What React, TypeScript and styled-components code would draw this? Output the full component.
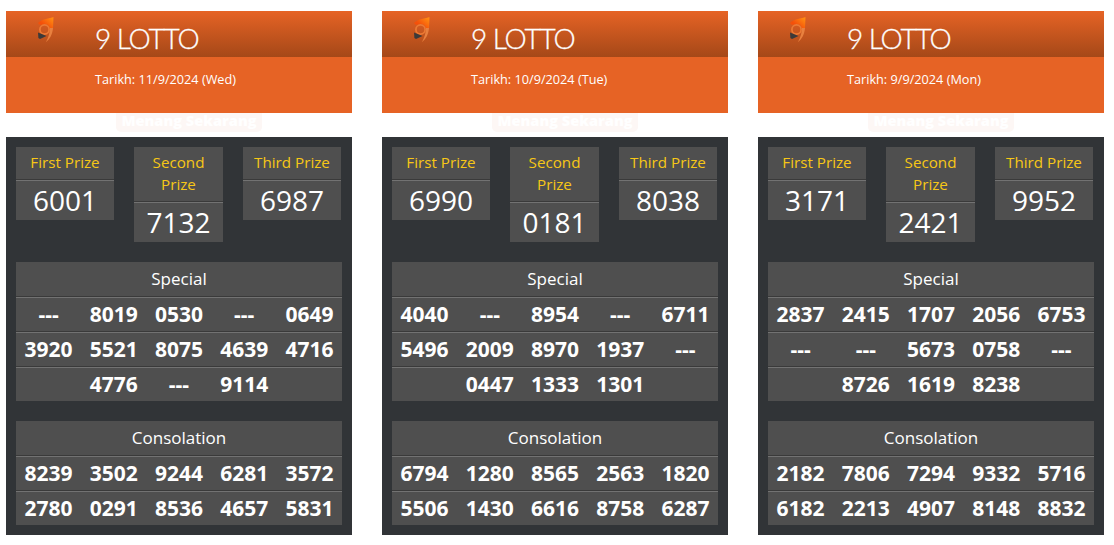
import React from 'react';
import styled, { createGlobalStyle } from 'styled-components';

interface DrawData {
  date: string;
  first: string;
  second: string;
  third: string;
  special: string[][];
  consolation: string[][];
}

const draws: DrawData[] = [
  {
    date: '11/9/2024 (Wed)',
    first: '6001',
    second: '7132',
    third: '6987',
    special: [
      ['---', '8019', '0530', '---', '0649'],
      ['3920', '5521', '8075', '4639', '4716'],
      ['', '4776', '---', '9114', ''],
    ],
    consolation: [
      ['8239', '3502', '9244', '6281', '3572'],
      ['2780', '0291', '8536', '4657', '5831'],
    ],
  },
  {
    date: '10/9/2024 (Tue)',
    first: '6990',
    second: '0181',
    third: '8038',
    special: [
      ['4040', '---', '8954', '---', '6711'],
      ['5496', '2009', '8970', '1937', '---'],
      ['', '0447', '1333', '1301', ''],
    ],
    consolation: [
      ['6794', '1280', '8565', '2563', '1820'],
      ['5506', '1430', '6616', '8758', '6287'],
    ],
  },
  {
    date: '9/9/2024 (Mon)',
    first: '3171',
    second: '2421',
    third: '9952',
    special: [
      ['2837', '2415', '1707', '2056', '6753'],
      ['---', '---', '5673', '0758', '---'],
      ['', '8726', '1619', '8238', ''],
    ],
    consolation: [
      ['2182', '7806', '7294', '9332', '5716'],
      ['6182', '2213', '4907', '8148', '8832'],
    ],
  },
];

const Logo = ({ id }: { id: string }) => (
  <LogoSvg viewBox="0 0 18 26" aria-hidden="true">
    <defs>
      <linearGradient id={id} x1="0.8" y1="0" x2="0.2" y2="0.5">
        <stop offset="0" stopColor="#ff8a12" />
        <stop offset="1" stopColor="#f4500a" />
      </linearGradient>
    </defs>
    <path d="M1 6 C5 2 10 2 16.5 0 L16 11 L12.5 11 C12.5 8 9.5 6.5 6.5 7.5 C4 8.2 2 8 1 6 Z" fill={`url(#${id})`} />
    <circle cx="7.5" cy="12.5" r="4.6" fill="none" stroke="#ec7a35" strokeWidth="1.7" />
    <path d="M13 11 L16 11 C15.5 17 13 22 9 25 C11.5 20 13 16 13 11 Z" fill="#e8803f" />
    <path d="M1 15.5 L9.5 19 L3 22 L1.4 21 Z" fill="#3b3a3a" />
  </LogoSvg>
);

const Rows = ({ rows }: { rows: string[][] }) => (
  <>
    {rows.map((row, idx) => (
      <NumberRow key={idx}>
        {row.map((num, i) => (
          <NumberCell key={i}>{num}</NumberCell>
        ))}
      </NumberRow>
    ))}
  </>
);

const App = () => (
  <>
    <GlobalStyle />
    <Page>
      {draws.map((d, idx) => (
        <Card key={idx}>
          <Header>
            <TitleBar>
              <Logo id={`logo-${idx}`} />
              <Title>9 LOTTO</Title>
            </TitleBar>
            <DateBar>Tarikh: {d.date}</DateBar>
          </Header>
          <GhostSlot>
            <GhostButton>Menang Sekarang</GhostButton>
          </GhostSlot>
          <Panel>
            <PrizeRow>
              <PrizeBox $width={98}>
                <PrizeName>First Prize</PrizeName>
                <PrizeValue>{d.first}</PrizeValue>
              </PrizeBox>
              <PrizeBox $width={89}>
                <PrizeName>Second Prize</PrizeName>
                <PrizeValue>{d.second}</PrizeValue>
              </PrizeBox>
              <PrizeBox $width={98}>
                <PrizeName>Third Prize</PrizeName>
                <PrizeValue>{d.third}</PrizeValue>
              </PrizeBox>
            </PrizeRow>
            <Table>
              <TableTitle>Special</TableTitle>
              <Rows rows={d.special} />
            </Table>
            <Table>
              <TableTitle>Consolation</TableTitle>
              <Rows rows={d.consolation} />
            </Table>
          </Panel>
        </Card>
      ))}
    </Page>
  </>
);

export default App;

const GlobalStyle = createGlobalStyle`
  html, body {
    margin: 0;
    padding: 0;
    background: #ffffff;
    font-family: 'Open Sans', 'Liberation Sans', sans-serif;
  }
`;

const Page = styled.div`
  display: flex;
  gap: 30px;
  padding: 11px 10px 10px 6px;
`;

const Card = styled.div`
  width: 346px;
  flex: none;
`;

const Header = styled.div`
  position: relative;
  z-index: 1;
  height: 102px;
  background: #e66325;
`;

const TitleBar = styled.div`
  height: 46px;
  display: flex;
  align-items: center;
  background: linear-gradient(to bottom, #e66325 0%, #a54818 100%);
`;

const LogoSvg = styled.svg`
  width: 18px;
  height: 26px;
  flex: none;
  margin: -9px 0 0 31px;
`;

const Title = styled.h1`
  margin: 8px 0 0 40px;
  font-family: Lato, sans-serif;
  font-weight: 300;
  font-size: 28px;
  letter-spacing: -1.1px;
  line-height: 38px;
  color: #ffffff;
  -webkit-text-stroke: 0.3px #ffffff;
`;

const DateBar = styled.div`
  padding: 13px 0 0 89px;
  font-size: 12.7px;
  line-height: 18px;
  color: #ffffff;
`;

const GhostSlot = styled.div`
  position: relative;
  height: 24px;
`;

const GhostButton = styled.div`
  position: absolute;
  left: 110px;
  bottom: 5px;
  width: 146px;
  height: 30px;
  border-radius: 5px;
  background: #fdf7f5;
  color: #ffffff;
  font-size: 14.6px;
  font-weight: 800;
  line-height: 30px;
  text-align: center;
  padding-top: 3px;
  box-sizing: border-box;
`;

const Panel = styled.div`
  background: #313437;
  padding: 10px;
`;

const PrizeRow = styled.div`
  display: flex;
  align-items: flex-start;
  gap: 20px;
`;

const PrizeBox = styled.div<{ $width: number }>`
  width: ${(p) => p.$width}px;
  background: #4f4f4f;
  text-align: center;
`;

const PrizeName = styled.div`
  padding: 4px 4px 6px;
  font-size: 15.2px;
  line-height: 22px;
  color: #f7c716;
  border-bottom: 1px solid #3a3a3a;
`;

const PrizeValue = styled.div`
  padding-top: 1px;
  font-size: 28px;
  line-height: 39px;
  color: #ffffff;
  box-shadow: inset 0 1px 0 #727272;
`;

const Table = styled.div`
  margin-top: 20px;
  background: #4f4f4f;
`;

const TableTitle = styled.div`
  height: 34px;
  font-size: 17px;
  line-height: 34px;
  text-align: center;
  color: #ffffff;
`;

const NumberRow = styled.div`
  display: grid;
  grid-template-columns: repeat(5, 1fr);
  box-sizing: border-box;
  height: 35px;
  border-top: 1px solid #3a3a3a;
  box-shadow: inset 0 1px 0 #727272;
`;

const NumberCell = styled.div`
  font-size: 21px;
  font-weight: 700;
  line-height: 34px;
  text-align: center;
  color: #ffffff;
`;
